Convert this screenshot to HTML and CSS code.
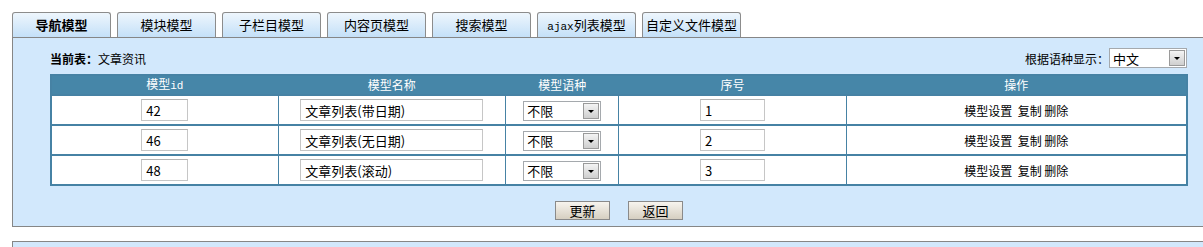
FILE: index.html
```html
<!DOCTYPE html>
<html lang="zh-CN">
<head>
    <meta charset="UTF-8">
    <title>模型管理</title>
    <link rel="stylesheet" href="styles.css">
</head>
<body>
    <div class="page">
        <ul class="tabs">
            <li class="tab active">导航模型</li>
            <li class="tab">模块模型</li>
            <li class="tab">子栏目模型</li>
            <li class="tab">内容页模型</li>
            <li class="tab">搜索模型</li>
            <li class="tab"><span class="mono">ajax</span>列表模型</li>
            <li class="tab">自定义文件模型</li>
        </ul>

        <div class="panel">
            <div class="toolbar">
                <div><b>当前表：</b>文章资讯</div>
                <div class="lang">
                    根据语种显示：
                    <div class="fake-select wide"><span>中文</span><i class="arrow"></i></div>
                </div>
            </div>

            <table class="grid">
                <thead>
                    <tr>
                        <th class="c1">模型<span class="mono">id</span></th>
                        <th class="c2">模型名称</th>
                        <th class="c3">模型语种</th>
                        <th class="c4">序号</th>
                        <th class="c5">操作</th>
                    </tr>
                </thead>
                <tbody>
                    <tr>
                        <td><input class="txt short" value="42"></td>
                        <td><input class="txt long" value="文章列表(带日期)"></td>
                        <td><div class="fake-select"><span>不限</span><i class="arrow"></i></div></td>
                        <td><input class="txt mid" value="1"></td>
                        <td class="ops">模型设置&nbsp; 复制 删除</td>
                    </tr>
                    <tr>
                        <td><input class="txt short" value="46"></td>
                        <td><input class="txt long" value="文章列表(无日期)"></td>
                        <td><div class="fake-select"><span>不限</span><i class="arrow"></i></div></td>
                        <td><input class="txt mid" value="2"></td>
                        <td class="ops">模型设置&nbsp; 复制 删除</td>
                    </tr>
                    <tr>
                        <td><input class="txt short" value="48"></td>
                        <td><input class="txt long" value="文章列表(滚动)"></td>
                        <td><div class="fake-select"><span>不限</span><i class="arrow"></i></div></td>
                        <td><input class="txt mid" value="3"></td>
                        <td class="ops">模型设置&nbsp; 复制 删除</td>
                    </tr>
                </tbody>
            </table>

            <div class="actions">
                <button class="btn">更新</button>
                <button class="btn">返回</button>
            </div>
        </div>

        <div class="panel next"></div>
    </div>
</body>
</html>
```

FILE: styles.css
```css
html, body {
    margin: 0;
    padding: 0;
    background: #fff;
    overflow: hidden;
}

body {
    font-family: "Noto Sans CJK SC", "DejaVu Sans", sans-serif;
    font-size: 12px;
    color: #000;
}

.page {
    padding: 12px 0 0 12px;
    width: 1220px;
}

.mono {
    font-family: "Liberation Mono", "DejaVu Sans Mono", monospace;
    font-size: 11px;
}

.tabs {
    list-style: none;
    margin: 0;
    padding: 0;
    display: flex;
    gap: 6px;
    height: 25px;
}

.tab {
    box-sizing: border-box;
    width: 99px;
    height: 25px;
    line-height: 23px;
    text-align: center;
    font-size: 13px;
    border: 1px solid #8c8c8c;
    border-bottom: none;
    border-radius: 3px 3px 0 0;
    background: linear-gradient(#eef6fd, #c4e0f8);
}

.tab.active {
    font-weight: bold;
}

.panel {
    box-sizing: border-box;
    border: 1px solid #868686;
    background: #d2e8fc;
    height: 190px;
    padding: 9px 0 0 37px;
}

.toolbar {
    width: 1138px;
    height: 22px;
    display: flex;
    justify-content: space-between;
    align-items: center;
}

.toolbar b {
    font-weight: bold;
}

.lang {
    display: flex;
    align-items: center;
}

.fake-select {
    box-sizing: border-box;
    display: inline-flex;
    align-items: center;
    justify-content: space-between;
    width: 78px;
    height: 20px;
    background: #fff;
    border: 1px solid #a5a9ad;
    padding: 0 1px 0 3px;
    text-align: left;
    font-size: 13px;
}

.fake-select.wide {
    width: 78px;
    margin-right: 1px;
}

.arrow {
    box-sizing: border-box;
    width: 16px;
    height: 16px;
    border: 1px solid #9a9a9a;
    background: linear-gradient(#f4f4f4, #cfcfcf);
    position: relative;
}

.arrow::after {
    content: "";
    position: absolute;
    left: 4px;
    top: 6px;
    border-left: 3px solid transparent;
    border-right: 3px solid transparent;
    border-top: 3px solid #000;
}

.grid {
    margin-top: 5px;
    width: 1138px;
    border-collapse: collapse;
    border: 2px solid #4682a4;
    background: #fff;
}

.grid th {
    background: #4686a8;
    color: #fff;
    font-weight: normal;
    height: 16px;
    line-height: 16px;
    padding: 0;
    border-left: 1px solid #4686a8;
}

.c1, .c2, .c4 { width: 20%; }
.c3 { width: 10%; }
.c5 { width: 30%; }

.grid td {
    height: 28px;
    padding: 0;
    text-align: center;
    border: 2px solid #4682a4;
    border-width: 2px 1px;
}

.grid td .fake-select {
    margin-top: 1px;
}

.txt {
    box-sizing: border-box;
    height: 22px;
    font: inherit;
    font-size: 13px;
    padding: 0 4px;
    border: 1px solid #c6c6c6;
    border-top-color: #b4b4b4;
    background: #fff;
    vertical-align: middle;
}

.short { width: 47px; }
.long { width: 183px; }
.mid { width: 65px; }

.ops {
    font-size: 12px;
}

.actions {
    width: 1138px;
    display: flex;
    justify-content: center;
    gap: 18px;
    margin-top: 15px;
}

.btn {
    box-sizing: border-box;
    width: 55px;
    height: 19px;
    padding: 0;
    font: inherit;
    font-size: 13px;
    line-height: 16px;
    border: 1px solid #8a8a8a;
    background: linear-gradient(#f7f4ee, #d6cfc1);
    color: #000;
}

.panel.next {
    margin-top: 14px;
    height: 6px;
    border-bottom: none;
}
```
